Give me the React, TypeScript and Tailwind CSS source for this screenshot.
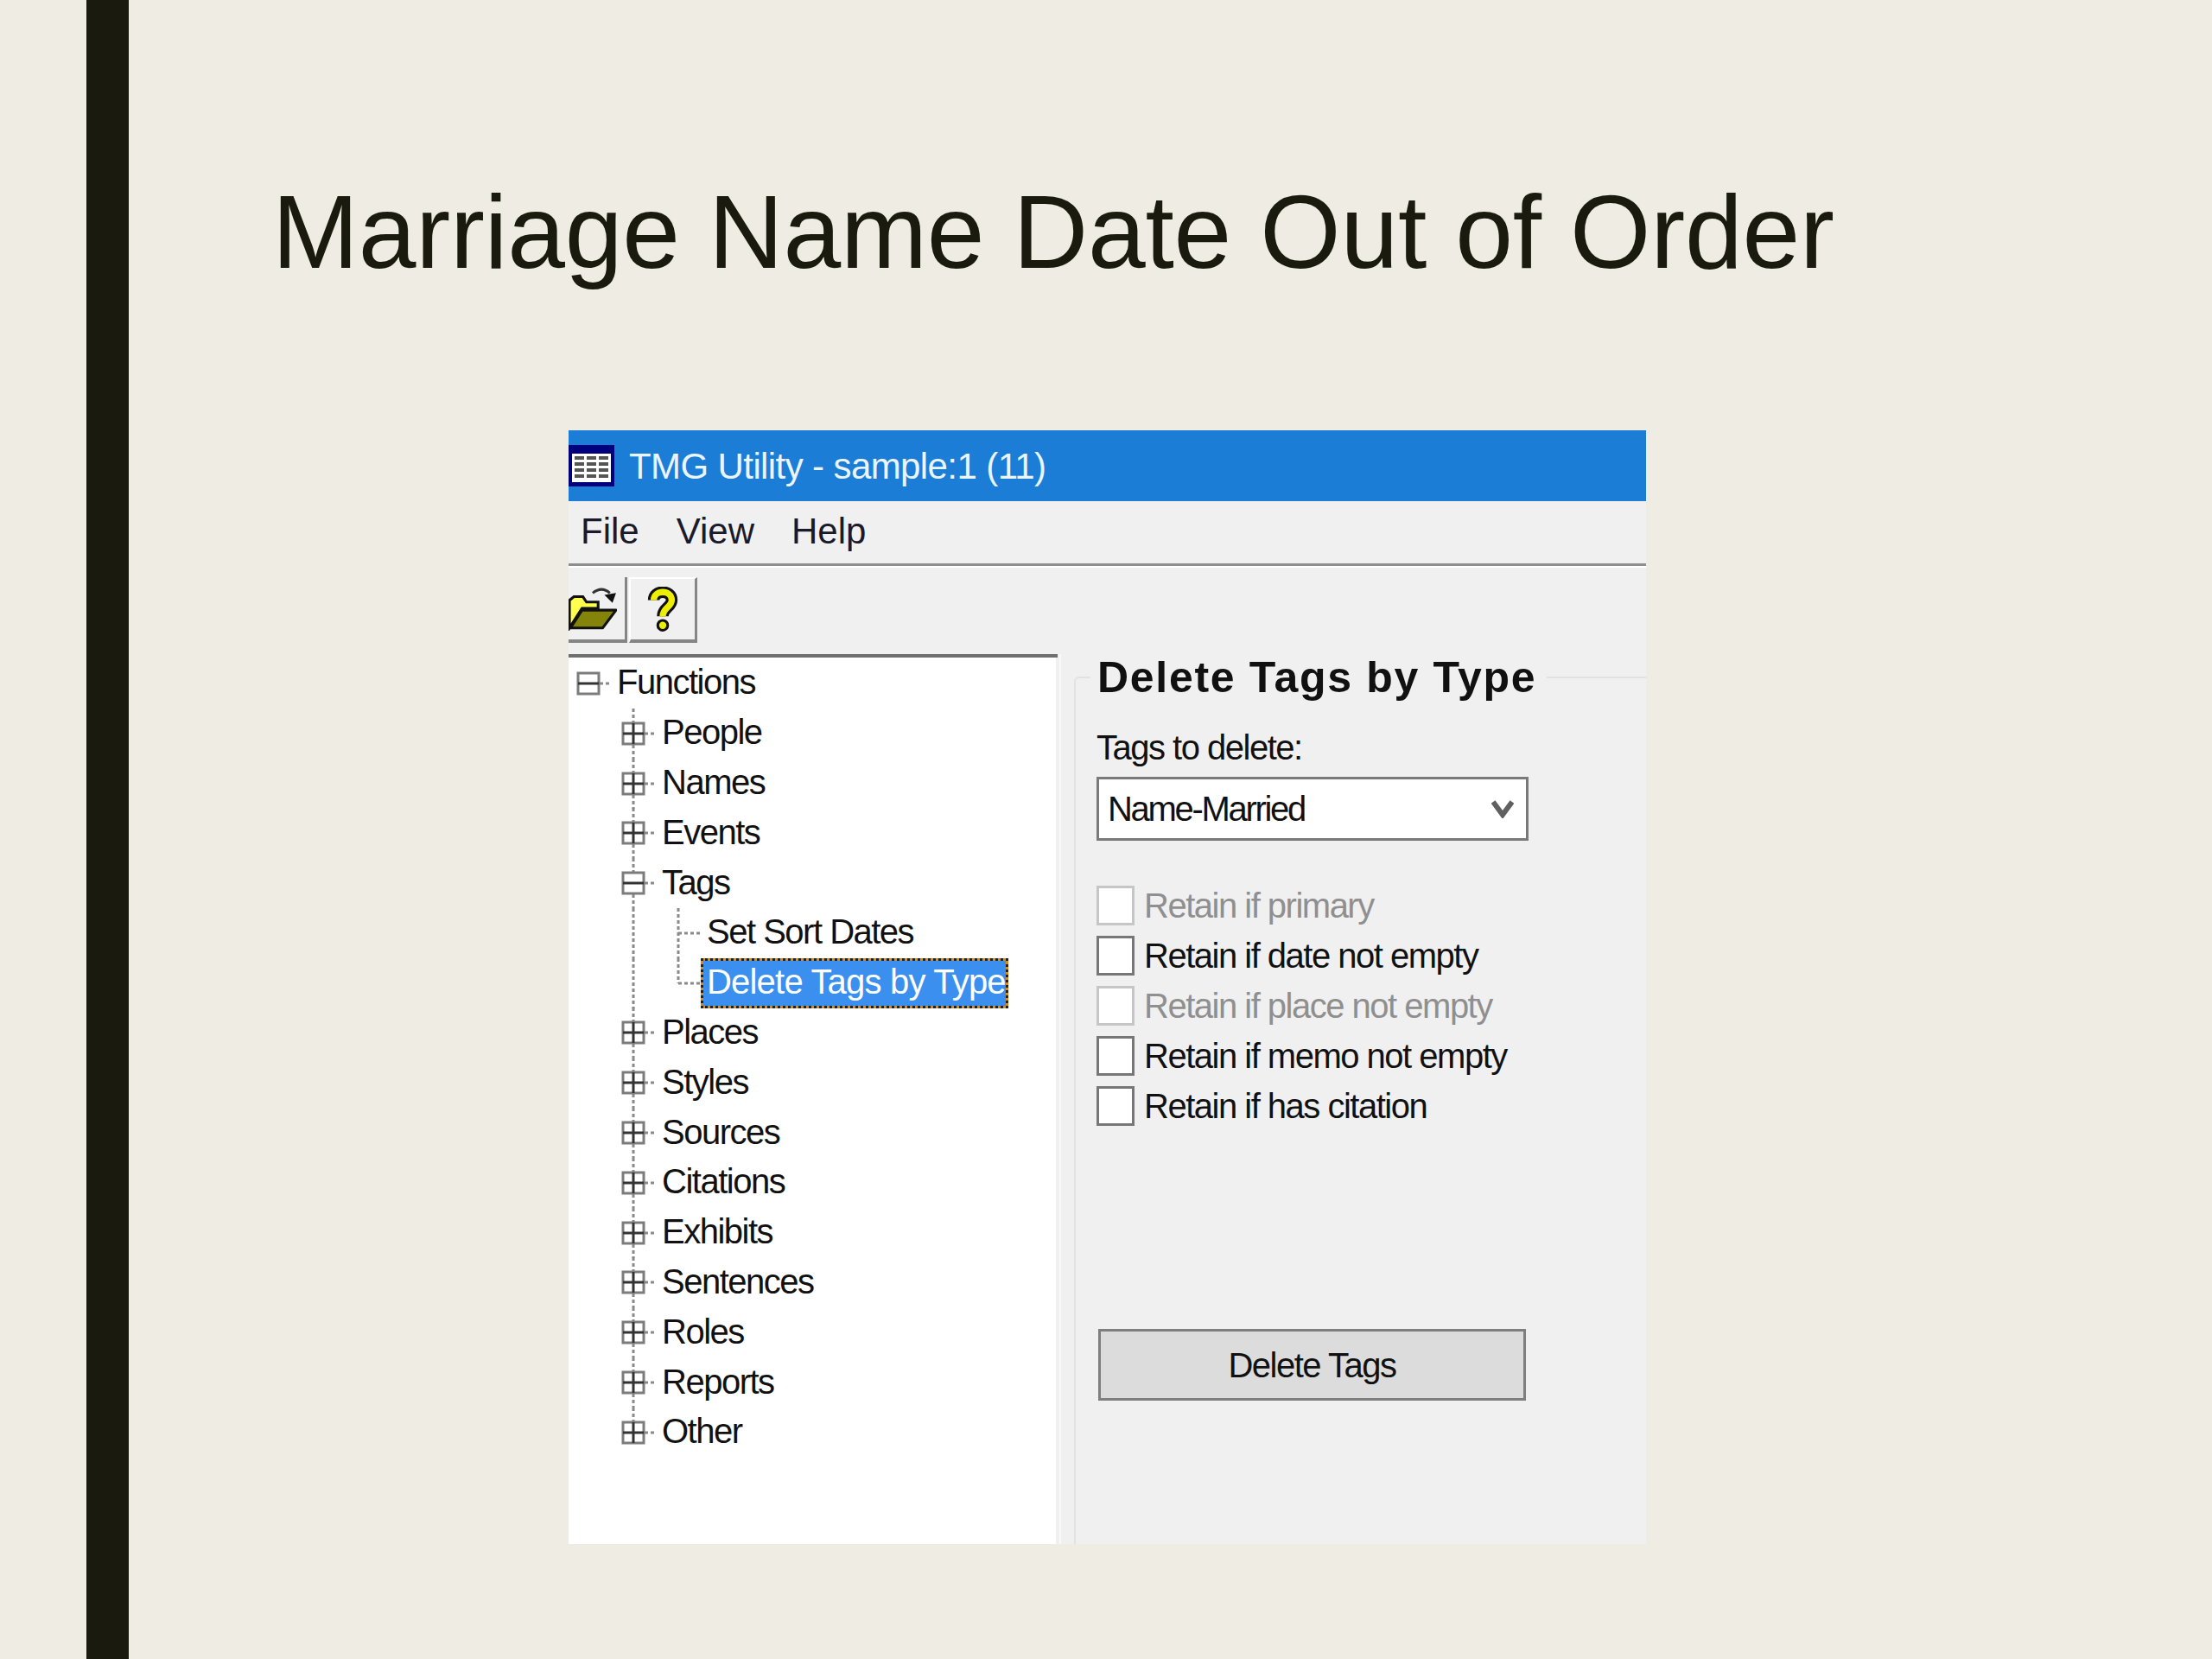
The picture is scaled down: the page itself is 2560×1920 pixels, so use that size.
import React from 'react';

type TreeRow = { label: string; level: 0 | 1 | 2; state?: 'plus' | 'minus'; last?: boolean; selected?: boolean };

const treeRows: TreeRow[] = [
  { label: 'Functions', level: 0, state: 'minus' },
  { label: 'People', level: 1, state: 'plus' },
  { label: 'Names', level: 1, state: 'plus' },
  { label: 'Events', level: 1, state: 'plus' },
  { label: 'Tags', level: 1, state: 'minus' },
  { label: 'Set Sort Dates', level: 2 },
  { label: 'Delete Tags by Type', level: 2, last: true, selected: true },
  { label: 'Places', level: 1, state: 'plus' },
  { label: 'Styles', level: 1, state: 'plus' },
  { label: 'Sources', level: 1, state: 'plus' },
  { label: 'Citations', level: 1, state: 'plus' },
  { label: 'Exhibits', level: 1, state: 'plus' },
  { label: 'Sentences', level: 1, state: 'plus' },
  { label: 'Roles', level: 1, state: 'plus' },
  { label: 'Reports', level: 1, state: 'plus' },
  { label: 'Other', level: 1, state: 'plus', last: true },
];

const options = [
  { label: 'Retain if primary', disabled: true },
  { label: 'Retain if date not empty' },
  { label: 'Retain if place not empty', disabled: true },
  { label: 'Retain if memo not empty' },
  { label: 'Retain if has citation' },
];

const GridIcon = () => (
  <svg width="53" height="48" viewBox="0 0 53 48" className="shrink-0">
    <rect width="53" height="48" fill="#00007c" />
    <rect x="4" y="10" width="45" height="33" fill="#fff" />
    {[13, 20, 27, 34].map((y) =>
      [7, 21, 35].map((x) => <rect key={`${x}-${y}`} x={x} y={y} width="11" height="4" fill="#555" />)
    )}
  </svg>
);

const FolderIcon = () => (
  <svg width="56" height="52" viewBox="0 0 54 50">
    <path d="M1 47 V16 L6 12 H16 L20 18 H33 V25 H15 Z" fill="#ffff4d" stroke="#111" strokeWidth="3" />
    <path d="M2 47 L15 27 H53 L38 47 Z" fill="#84840a" stroke="#111" strokeWidth="3" strokeLinejoin="round" />
    <path d="M27 8 Q37 0 46 8" fill="none" stroke="#333" strokeWidth="3" />
    <path d="M40 10 L53 8 L49 19 Z" fill="#111" />
  </svg>
);

const HelpIcon = () => (
  <svg width="38" height="52" viewBox="0 0 36 50">
    <g fill="none">
      <path d="M8 15 C8 3 28 3 28 15 C28 23 18 23 18 33" stroke="#111" strokeWidth="13" />
      <path d="M8 15 C8 3 28 3 28 15 C28 23 18 23 18 33" stroke="#eeee00" strokeWidth="7" />
    </g>
    <circle cx="18" cy="43" r="7" fill="#111" />
    <circle cx="18" cy="43" r="4" fill="#eeee00" />
  </svg>
);

// dotted connectors and the plus/minus box of one tree row
const TreeGlyph = ({ row }: { row: TreeRow }) => {
  const width = row.level === 0 ? 54 : row.level === 1 ? 106 : row.selected ? 151 : 158;
  const boxX = row.level === 0 ? 8 : 60;
  const dots = { stroke: '#8a8a8a', strokeWidth: 3, strokeDasharray: '4 3', fill: 'none' };
  return (
    <svg width={width} height="58" viewBox={`0 0 ${width} 58`} className="shrink-0">
      {row.level > 0 && <path d={`M73 0 V${row.level === 1 && row.last ? 16 : 58}`} {...dots} />}
      {row.level === 2 && (
        <>
          <path d={`M125 0 V${row.last ? 29 : 58}`} {...dots} />
          <path d="M125 29 H150" {...dots} />
        </>
      )}
      {row.state && (
        <>
          <path d={`M${boxX + 26} 29 H${boxX + 40}`} {...dots} />
          <rect x={boxX + 1} y="17" width="24" height="24" fill="#fff" stroke="#7c7c7c" strokeWidth="3" />
          <path d={`M${boxX + 1} 29 H${boxX + 25}`} stroke="#333" strokeWidth="3" />
          {row.state === 'plus' && <path d={`M${boxX + 13} 17 V41`} stroke="#333" strokeWidth="3" />}
        </>
      )}
    </svg>
  );
};

const App = () => {
  return (
    <div className="flex w-[2560px] h-[1920px] bg-[#eeece3] pl-[100px] font-['Liberation_Sans',sans-serif]">
      <div className="w-[49px] shrink-0 bg-[#1a1b0e]" />

      <div className="flex flex-col flex-1">
        <h1 className="mt-[208px] ml-[166px] text-[120px] leading-[120px] text-[#1a1b0e] tracking-[-0.2px] whitespace-nowrap">
          Marriage Name Date Out of Order
        </h1>

        <div className="mt-[170px] ml-[509px] w-[1247px] h-[1289px] flex flex-col bg-[#f0f0f0] text-[40px] text-[#111]">
          <div className="h-[82px] shrink-0 flex items-center gap-[17px] bg-[#1b7dd6] text-[#eaf5ff] text-[42px] tracking-[-0.6px]">
            <GridIcon />
            <span>TMG Utility - sample:1 (11)</span>
          </div>

          <div className="h-[75px] shrink-0 flex items-center gap-[43px] pl-[14px] pb-[4px] border-b-[3px] border-[#8e8e8e] text-[42px] text-[#1a1a2a]">
            <span>File</span>
            <span>View</span>
            <span>Help</span>
          </div>

          <div className="h-[102px] shrink-0 flex items-start pt-[11px] gap-[2px] border-t-2 border-white">
            <div className="w-[68px] h-[76px] flex items-center border-r-[3px] border-b-[4px] border-[#858585]">
              <FolderIcon />
            </div>
            <div className="w-[79px] h-[76px] flex items-center justify-center border-r-[3px] border-b-[4px] border-l-2 border-t-2 border-l-white border-t-white border-r-[#858585] border-b-[#858585]">
              <HelpIcon />
            </div>
          </div>

          <div className="flex flex-1 min-h-0 tracking-[-1.5px]">
            <div className="w-[566px] shrink-0 border-t-[4px] border-[#6f6f6f]">
              <div className="h-full w-[564px] bg-white pl-[2px] pt-[1px]">
                {treeRows.map((row) => (
                  <div key={row.label} className="h-[57.8px] flex items-center">
                    <TreeGlyph row={row} />
                    {row.selected ? (
                      <span className="h-[58px] w-[356px] border-[3px] border-dotted border-[#222] bg-[#d88a1e] tracking-[-0.8px]">
                        <span className="h-full flex items-center pl-[4px] pb-[3px] bg-[#3b8fee] text-white">{row.label}</span>
                      </span>
                    ) : (
                      <span className="pb-[3px]">{row.label}</span>
                    )}
                  </div>
                ))}
              </div>
            </div>

            <div className="flex flex-1 ml-[2px] border-l-2 border-[#fafafa] pl-[15px]">
              <fieldset className="flex-1 flex flex-col border-t-2 border-l-2 border-[#e0e3e5] rounded-tl-[6px] pl-[24px]">
                <legend className="-ml-[7px] pl-[8px] pr-[12px] text-[50px] leading-[54px] font-bold tracking-[1.7px]">
                  Delete Tags by Type
                </legend>
                <div className="mt-[31px] leading-[46px]">Tags to delete:</div>
                <div className="mt-[11px] w-[500px] h-[74px] flex items-center justify-between pl-[10px] pr-[14px] border-[3px] border-[#7a7a7a] bg-white tracking-[-2.3px]">
                  <span>Name-Married</span>
                  <svg width="26" height="22" viewBox="0 0 26 22">
                    <path d="M2 3 L13 18 L24 3" fill="none" stroke="#606060" strokeWidth="6" />
                  </svg>
                </div>

                <div className="mt-[52px] flex flex-col gap-[12px] tracking-[-1.5px]">
                  {options.map((o) => (
                    <div key={o.label} className={`h-[46px] flex items-center gap-[11px] ${o.disabled ? 'text-[#8f8f8f]' : ''}`}>
                      <span
                        className={`w-[44px] h-[46px] bg-white border-[3px] ${o.disabled ? 'border-[#c6c6c6]' : 'border-[#777]'}`}
                      />
                      <span>{o.label}</span>
                    </div>
                  ))}
                </div>

                <div className="mt-[235px] ml-[2px] w-[495px] h-[83px] flex items-center justify-center border-[3px] border-[#7f7f7f] bg-[#dcdcdc]">
                  Delete Tags
                </div>
              </fieldset>
            </div>
          </div>
        </div>
      </div>
    </div>
  );
};

export default App;
